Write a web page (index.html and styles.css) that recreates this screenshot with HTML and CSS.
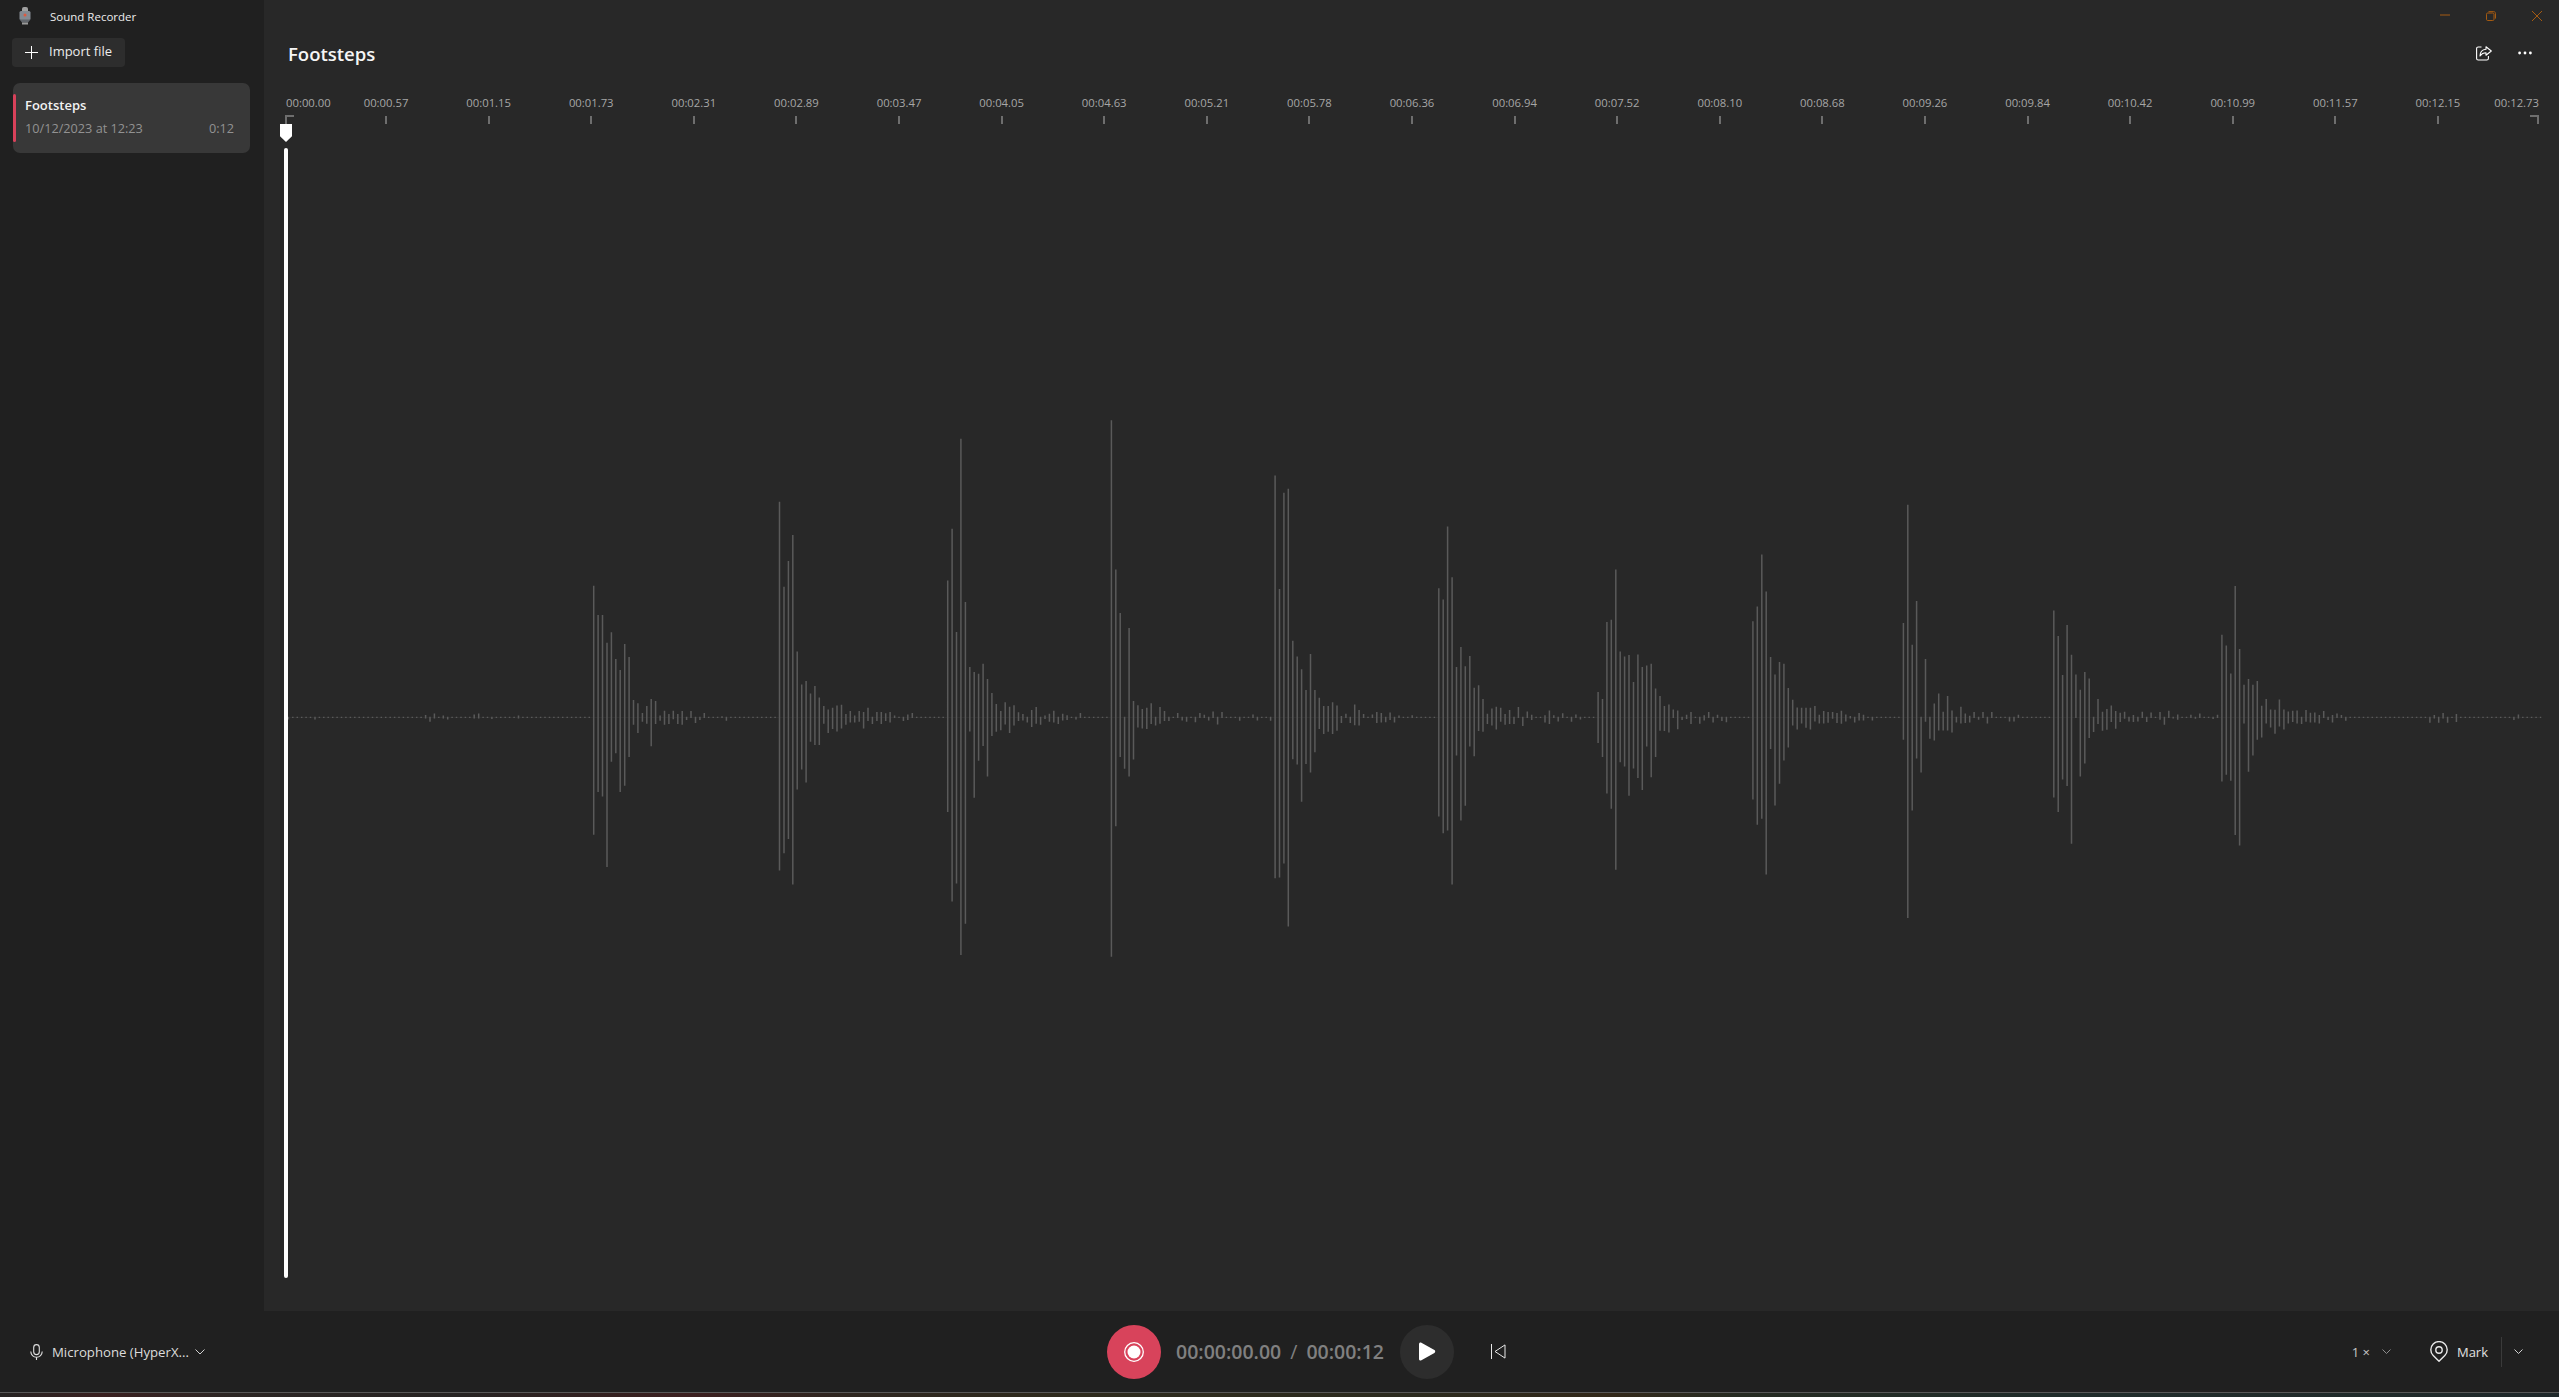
FILE: index.html
```html
<!DOCTYPE html>
<html lang="en">
<head>
<meta charset="utf-8">
<title>Sound Recorder</title>
<link rel="stylesheet" href="styles.css">
</head>
<body>
<div class="app">
  <div class="workspace">
    <aside class="sidebar">
      <div class="app-title">
        <svg class="app-icon" width="12" height="18" viewBox="0 0 12 18"><rect x="3" y="0" width="6" height="6" rx="2" fill="#a0a0a0"/><rect x=".5" y="4" width="11" height="9" rx="1.500" fill="#848a92"/><circle cx="6" cy="8" r="1.500" fill="#e0593f"/><path d="M.5 12.500h11L9 15.500H3z" fill="#62666c"/><rect x="3" y="15.500" width="6" height="2" fill="#9a9a9a"/></svg>
        <span>Sound Recorder</span>
      </div>
      <button class="import-button">
        <svg width="13" height="13" viewBox="0 0 13 13"><path d="M6.5 0v13M0 6.5h13" stroke="#fff" stroke-width="1" fill="none"/></svg>
        <span>Import file</span>
      </button>
      <div class="recording-card">
        <div class="recording-accent"></div>
        <div class="recording-body">
          <div class="recording-name">Footsteps</div>
          <div class="recording-meta"><span>10/12/2023 at 12:23</span><span>0:12</span></div>
        </div>
      </div>
    </aside>
    <main class="main">
      <div class="window-controls">
        <div class="window-button"><svg width="10" height="10" viewBox="0 0 10 10"><path d="M0 4h10" class="window-glyph"/></svg></div>
        <div class="window-button"><svg width="10" height="10" viewBox="0 0 10 10"><rect x=".5" y="2" width="7.5" height="7.5" rx="1.2" class="window-glyph"/><path d="M2.5 .6h5.2c1 0 1.8.8 1.8 1.8v5.2" class="window-glyph"/></svg></div>
        <div class="window-button"><svg width="10" height="10" viewBox="0 0 10 10"><path d="M0 0l10 10M10 0L0 10" class="window-glyph"/></svg></div>
      </div>
      <header class="header">
        <h1 class="title">Footsteps</h1>
        <div class="header-actions">
          <div class="icon-button"><svg width="16" height="15" viewBox="0 0 16 15" fill="none" stroke="#fff" stroke-width="1.1"><path d="M5.5 1H2.2C1.300 1 .6 1.700.6 2.600v9.800c0 .9.700 1.600 1.600 1.600h8.600c.9 0 1.600-.7 1.600-1.600V10"/><path d="M10 .8l5.300 4.200L10 9.200V6.800C7.600 6.800 5.500 7.800 4 10c0-3.600 2.400-6.400 6-6.800z" stroke-linejoin="round"/></svg></div>
          <div class="icon-button"><svg width="14" height="4" viewBox="0 0 14 4" fill="#fff"><circle cx="1.600" cy="2" r="1.400"/><circle cx="7" cy="2" r="1.400"/><circle cx="12.400" cy="2" r="1.400"/></svg></div>
        </div>
      </header>
      <div class="ruler">
        <div class="ruler-end"><span>00:00.00</span><i class="bracket bracket-start"></i></div>
        <div class="tick"><span>00:00.57</span><i></i></div>
        <div class="tick"><span>00:01.15</span><i></i></div>
        <div class="tick"><span>00:01.73</span><i></i></div>
        <div class="tick"><span>00:02.31</span><i></i></div>
        <div class="tick"><span>00:02.89</span><i></i></div>
        <div class="tick"><span>00:03.47</span><i></i></div>
        <div class="tick"><span>00:04.05</span><i></i></div>
        <div class="tick"><span>00:04.63</span><i></i></div>
        <div class="tick"><span>00:05.21</span><i></i></div>
        <div class="tick"><span>00:05.78</span><i></i></div>
        <div class="tick"><span>00:06.36</span><i></i></div>
        <div class="tick"><span>00:06.94</span><i></i></div>
        <div class="tick"><span>00:07.52</span><i></i></div>
        <div class="tick"><span>00:08.10</span><i></i></div>
        <div class="tick"><span>00:08.68</span><i></i></div>
        <div class="tick"><span>00:09.26</span><i></i></div>
        <div class="tick"><span>00:09.84</span><i></i></div>
        <div class="tick"><span>00:10.42</span><i></i></div>
        <div class="tick"><span>00:10.99</span><i></i></div>
        <div class="tick"><span>00:11.57</span><i></i></div>
        <div class="tick"><span>00:12.15</span><i></i></div>
        <div class="ruler-end ruler-end-right"><span>00:12.73</span><i class="bracket bracket-end"></i></div>
      </div>
      <div class="track">
        <svg class="waveform" id="waveform" viewBox="264 124 2295 1187" preserveAspectRatio="none"></svg>
        <div class="playhead-thumb"></div>
        <div class="playhead-line"></div>
      </div>
    </main>
  </div>
  <footer class="transport">
    <div class="transport-left">
      <svg width="13" height="16" viewBox="0 0 13 16" fill="none" stroke="#e0e0e0" stroke-width="1.100"><rect x="3.700" y=".6" width="5.600" height="10" rx="2.800"/><path d="M.8 7.500a5.700 5.700 0 0 0 11.400 0M6.500 13.200V16"/></svg>
      <span>Microphone (HyperX...</span>
      <svg class="chevron" width="10" height="6" viewBox="0 0 10 6"><path d="M.5.5L5 5 9.500.5"/></svg>
    </div>
    <div class="transport-center">
      <div class="record-button"><svg width="20" height="20" viewBox="0 0 20 20"><circle cx="10" cy="10" r="9.300" fill="none" stroke="#fff" stroke-width="1.300"/><circle cx="10" cy="10" r="6.500" fill="#fff"/></svg></div>
      <div class="time"><span>00:00:00.00</span><span class="time-sep">/</span><span>00:00:12</span></div>
      <div class="play-button"><svg width="18" height="19" viewBox="0 0 18 19"><path d="M1 2.200C1 .8 2.300.2 3.400.8l13 7.300c1.100.6 1.100 2.200 0 2.800l-13 7.300C2.300 19 1 18.300 1 17z" fill="#fff"/></svg></div>
      <div class="skip-button"><svg width="15" height="15" viewBox="0 0 15 15" fill="none" stroke="#e8e8e8" stroke-width="1"><path d="M.5 0v15M14 .9v13.200L4 7.500z" stroke-linejoin="round"/></svg></div>
    </div>
    <div class="transport-right">
      <div class="speed"><span>1 ×</span><svg class="chevron chevron-dim" width="9" height="5" viewBox="0 0 9 5"><path d="M.5.5L4.500 4.500 8.500.5"/></svg></div>
      <div class="mark"><svg width="18" height="21" viewBox="0 0 18 21" fill="none" stroke="#e8e8e8" stroke-width="1.400"><path d="M9 20.200l-5.800-5.600a8.200 8.200 0 1 1 11.600 0z" stroke-linejoin="round"/><circle cx="9" cy="9" r="3.200"/></svg><span>Mark</span></div>
      <div class="divider"></div>
      <svg class="chevron" width="9" height="5" viewBox="0 0 9 5"><path d="M.5.5L4.500 4.500 8.500.5"/></svg>
    </div>
  </footer>
  <div class="desktop-strip"></div>
</div>
<script src="wave.js"></script>
</body>
</html>
```
FILE: styles.css
```css
* { box-sizing: border-box; }
html, body { margin: 0; height: 100%; background: #202020; overflow: hidden; }
body { font-family: "Open Sans", "Noto Sans", "Liberation Sans", sans-serif; color: #e8e8e8; }
svg { display: block; flex: none; }

.app { display: flex; flex-direction: column; height: 1397px; }
.workspace { display: flex; height: 1311px; }

.sidebar { width: 264px; background: #202020; flex: none; }
.app-title { height: 34px; display: flex; align-items: center; padding: 0 0 2px 19px; gap: 19px; font-size: 11.500px; color: #ececec; }
.import-button { margin: 4px 0 0 12px; width: 113px; height: 29px; display: flex; align-items: center; gap: 11px; padding: 0 0 1px 13px; border: 0; border-radius: 4px; background: #2d2d2d; color: #ececec; font: 13px "Open Sans", sans-serif; }
.import-button span { margin-top: -2px; }
.recording-card { margin: 16px 0 0 13px; width: 237px; height: 70px; background: #383838; border-radius: 7px; display: flex; align-items: center; }
.recording-accent { width: 3px; height: 48px; background: #d8415a; border-radius: 2px; flex: none; }
.recording-body { flex: 1; padding: 0 16px 3px 9px; }
.recording-name { font-size: 13px; font-weight: 600; color: #f2f2f2; line-height: 20px; }
.recording-meta { display: flex; justify-content: space-between; margin-top: 3px; font-size: 12.700px; line-height: 20px; color: #929292; }

.main { flex: 1; background: #282828; display: flex; flex-direction: column; min-width: 0; }
.window-controls { height: 30px; display: flex; justify-content: flex-end; margin-right: -1px; padding-top: 2px; }
.window-button { width: 46px; display: flex; align-items: center; justify-content: center; }
.window-glyph { fill: none; stroke: #a55b12; stroke-width: 1; }
.header { height: 50px; display: flex; align-items: center; justify-content: space-between; padding: 0 14px 0 24px; }
.title { margin: -3px 0 0; font-size: 18.500px; font-weight: 600; color: #f5f5f5; }
.header-actions { display: flex; gap: 1px; margin-top: -4px; }
.icon-button { width: 40px; height: 30px; display: flex; align-items: center; justify-content: center; }

.ruler { height: 44px; padding: 13px 20px 0 21px; display: flex; font-size: 11.300px; color: #a6a6a6; }
.ruler span { display: block; height: 20px; line-height: 20px; white-space: nowrap; }
.tick { flex: 0 0 102.600px; display: flex; flex-direction: column; align-items: center; }
.tick i { display: block; width: 2px; height: 8px; margin-top: 3px; background: #6e6e6e; }
.ruler-end { flex: 1; min-width: 0; display: flex; flex-direction: column; align-items: flex-start; }
.ruler-end span { padding-left: 1px; }
.ruler-end-right { align-items: flex-end; }
.ruler-end-right span { padding-left: 0; margin-left: -10px; }
.bracket { display: block; width: 9px; height: 9px; margin-top: 2px; border-top: 2px solid #6e6e6e; }
.bracket-start { border-left: 2px solid #6e6e6e; }
.bracket-end { border-right: 2px solid #6e6e6e; }

.track { flex: 1; position: relative; }
.waveform { position: absolute; inset: 0; width: 100%; height: 100%; }
.wave-bars { stroke: #5a5a5a; stroke-width: 1.500; fill: none; }
.wave-axis { stroke: #323232; stroke-width: 1; }
.playhead-thumb { position: absolute; left: 16px; top: 0; width: 12px; height: 18px; background: #fff; clip-path: polygon(0 0, 100% 0, 100% 68%, 50% 100%, 0 68%); }
.playhead-line { position: absolute; left: 20px; top: 24px; width: 4px; height: 1130px; background: #fff; border-radius: 2px; }

.transport { height: 81px; background: #202020; display: flex; align-items: center; flex: none; font-size: 13px; }
.transport-left { flex: 0 0 1107px; display: flex; align-items: center; padding-left: 30px; gap: 9px; font-size: 13.200px; color: #dcdcdc; }
.transport-left .chevron { margin-left: -3px; }
.chevron { fill: none; stroke: #d0d0d0; stroke-width: 1; }
.chevron-dim { stroke: #8e8e8e; }
.transport-center { display: flex; align-items: center; }
.record-button, .play-button { width: 54px; height: 54px; border-radius: 50%; display: flex; align-items: center; justify-content: center; flex: none; }
.record-button { background: #d8435b; }
.play-button { background: #2d2d2d; margin-left: 16px; padding-left: 1px; }
.time { display: flex; gap: 9px; margin-left: 15px; font-size: 19.500px; font-weight: 600; color: #808080; white-space: nowrap; }
.time-sep { font-weight: 400; }
.skip-button { margin-left: 37px; }
.transport-right { margin-left: auto; display: flex; align-items: center; padding-right: 36px; }
.speed { display: flex; align-items: center; gap: 12px; color: #c8c8c8; margin-right: 39px; }
.mark { display: flex; align-items: center; gap: 9px; color: #e0e0e0; }
.divider { width: 1px; height: 30px; background: #3a3a3a; margin: 0 12px 0 13px; }
.desktop-strip { flex: 1; border-top: 1px solid #585858; background: linear-gradient(90deg, #252322 0%, #3a2020 4%, #2c2624 9%, #262322 18%, #3c1f1f 27%, #2e2620 33%, #2e2a1c 42%, #2b2a1e 55%, #33291a 63%, #262b22 68%, #1f2c2a 80%, #20292b 100%); }
```
FILE: wave.js
```js
// Waveform samples: [x, top, bottom] read in the coordinates of each source segment.
var segments = [
  { ox: 560, sx: 2.613, sy: 2.703, c: 858, d: [
    88,502,1175, 99.5,581,1060, 111,581,1072, 122,656,1262, 134,628,978, 146,700,955, 157,730,1060, 169,660,1043, 180,695,965,
    192,811,878, 203,820,900, 214,846,870, 226,827,875, 238,808,936, 249,814,876, 261,853,867, 272,840,878, 284,849,876, 295,840,863,
    307,849,876, 318,841,878, 330,856,865, 341,841,860, 353,856,873, 364,856,865, 376,846,860, 422,855,860, 434,856,867,
    573,275,1272, 585,505,1225, 596,435,1187, 608,365,1310, 619,680,1053, 631,769,999, 642,760,1034, 654,793,924, 666,773,933, 677,804,933,
    689,827,875, 700,837,900, 712,832,889, 723,826,896, 735,824,888, 746,849,878, 758,841,872, 770,853,872, 781,841,870, 793,843,888,
    804,832,868, 816,856,876, 828,843,868, 839,843,876, 851,847,868, 862,843,872, 874,853,860, 897,856,868, 908,850,865, 920,846,860,
    1012,488,1114, 1024,348,1356, 1035,627,1307, 1047,105,1500, 1059,546,1416, 1070,722,896, 1082,735,1075, 1093,740,975, 1105,713,935, 1117,754,1018,
    1128,792,908, 1140,822,897, 1151,841,893, 1163,817,877, 1175,829,900, 1186,825,880, 1198,844,868, 1209,849,866, 1221,856,872, 1233,838,884,
    1244,830,875, 1256,856,878, 1267,853,862, 1279,848,870, 1290,840,872, 1302,856,876, 1313,848,866, 1325,852,865, 1348,856,864, 1359,846,860,
    1440,55,1505, 1451,458,1152, 1463,576,965, 1475,857,997, 1486,616,1018, 1498,814,972, 1510,825,885, 1521,835,888, 1533,832,889, 1544,820,876, 1556,856,880
  ] },
  { ox: 1160, sx: 2.613, sy: 2.703, c: 858, d: [
    0,830,875, 11,841,868, 23,856,868, 46,846,860, 57,856,866, 69,856,870, 92,856,871, 103,846,860, 115,851,860, 127,856,866, 138,842,860, 150,856,877, 161,843,860,
    207,856,867, 242,850,860, 254,856,866, 288,856,867,
    300,204,1293, 311,511,1291, 323,251,1253, 334,240,1423, 346,651,971, 358,693,985, 369,728,1086, 381,784,984, 392,687,1007, 404,784,952,
    415,805,889, 427,827,903, 438,827,897, 450,817,903, 462,826,894, 473,854,873, 485,848,860, 496,856,873, 508,823,879, 519,838,880,
    531,849,860, 554,850,860, 565,843,873, 577,846,872, 589,856,871, 600,845,865, 612,856,872, 623,853,860, 658,852,860,
    728,509,1126, 739,539,1171, 751,342,1164, 762,479,1310, 774,722,961, 785,668,1137, 797,720,1097, 809,692,937, 820,778,963, 832,771,895,
    843,808,897, 855,848,876, 866,834,880, 878,829,891, 889,832,870, 901,849,878, 912,838,876, 924,856,876, 935,830,858, 947,856,881,
    958,842,860, 970,851,865, 1005,852,872, 1016,839,876, 1028,852,860, 1040,856,869, 1051,847,860, 1074,856,870, 1086,850,860, 1097,856,864,
    1144,789,927, 1155,808,965, 1167,600,1064, 1178,594,1105, 1190,458,1270, 1202,680,979, 1213,693,991, 1225,689,1070, 1236,762,996, 1248,688,1022,
    1259,722,1054, 1271,718,937, 1283,713,1020, 1294,780,965, 1306,800,894, 1318,827,895, 1329,823,899, 1341,837,860, 1352,839,890, 1364,856,865,
    1375,851,862, 1387,843,876, 1410,856,875, 1422,852,866, 1433,843,860, 1445,856,872, 1456,851,860, 1468,856,868, 1480,856,871,
    1549,598,1080, 1560,558,1148
  ] },
  { ox: 1760, sx: 2.8, sy: 3, c: 713, d: [
    5,224,1017, 17,335,1184, 28,532,808, 41,584,977, 53,547,912, 66,552,842, 78,625,803, 90,660,737, 103,683,749, 115,684,731, 128,684,744, 140,684,749,
    153,679,725, 165,705,731, 178,694,731, 190,697,729, 202,697,717, 214,700,730, 227,693,732, 239,704,725, 252,709,716, 264,711,728, 276,700,722, 289,705,722, 313,711,722,
    400,430,780, 412,75,1315, 425,495,992, 437,364,836, 450,711,878, 462,538,726, 475,711,777, 487,671,782, 499,641,752, 512,696,752, 524,649,752, 536,692,758,
    549,711,728, 561,681,731, 574,701,730, 586,708,728, 598,697,714, 611,711,720, 623,697,714, 635,711,731, 648,697,714, 697,711,725, 710,711,725, 722,705,715,
    821,392,953, 834,469,997, 846,586,899, 859,436,919, 871,525,1092, 883,584,714, 896,630,890, 908,577,851, 920,596,775, 933,711,757, 946,658,733, 958,696,753,
    970,688,750, 983,677,727, 995,694,747, 1007,699,727, 1019,696,717, 1032,711,725, 1044,706,727, 1057,711,725, 1069,696,714, 1081,711,727, 1094,698,714,
    1119,697,720, 1131,711,735, 1143,693,714, 1156,711,716, 1168,704,720, 1205,705,714, 1218,711,717, 1230,701,714, 1268,711,718, 1280,705,714,
    1292,465,905, 1304,497,885, 1316,581,903, 1329,319,1066, 1341,508,1097, 1354,615,731, 1366,598,876, 1378,615,827, 1391,604,780, 1403,678,773, 1416,658,731,
    1428,689,743, 1441,690,762, 1453,659,740, 1466,689,749, 1478,695,731, 1490,693,727, 1502,692,731, 1515,711,733, 1527,691,726
  ] },
  { ox: 2310, sx: 3, sy: 3, c: 172, d: [
    0,158,187, 13,157,187, 26,165,190, 39,153,173, 53,172,180, 67,165,187, 79,160,172, 92,165,172, 105,172,182,
    357,172,188, 371,165,175, 384,172,188, 397,159,175, 410,172,188, 437,162,186, 610,172,180, 623,163,175
  ] },
  { ox: 270, sx: 3, sy: 3, c: 172, d: [
    55,172,178, 135,172,178, 465,165,175, 480,172,185, 493,160,175, 519,166,175, 533,172,178, 612,163,175, 625,160,175, 665,172,177, 745,166,175
  ] }
];

var CENTER = 717.4, ORIGIN = 593.7, STEP = 4.4245, FIRST = -69, LAST = 440, DOT = 0.6;
var bars = {};
segments.forEach(function (seg) {
  for (var i = 0; i < seg.d.length; i += 3) {
    var x = seg.ox + seg.d[i] / seg.sx;
    var index = Math.round((x - ORIGIN) / STEP);
    bars[index] = [(seg.c - seg.d[i + 1]) / seg.sy, (seg.d[i + 2] - seg.c) / seg.sy];
  }
});

var path = "";
for (var n = FIRST; n <= LAST; n++) {
  var bar = bars[n] || [DOT, DOT];
  var px = (ORIGIN + n * STEP).toFixed(1);
  path += "M" + px + " " + (CENTER - Math.max(bar[0], DOT)).toFixed(1) + "V" + (CENTER + Math.max(bar[1], DOT)).toFixed(1);
}

var NS = "http://www.w3.org/2000/svg";
var svg = document.getElementById("waveform");
var axis = document.createElementNS(NS, "path");
axis.setAttribute("d", "M288 " + CENTER + "H2539");
axis.setAttribute("class", "wave-axis");
svg.appendChild(axis);
var wave = document.createElementNS(NS, "path");
wave.setAttribute("d", path);
wave.setAttribute("class", "wave-bars");
svg.appendChild(wave);
```
